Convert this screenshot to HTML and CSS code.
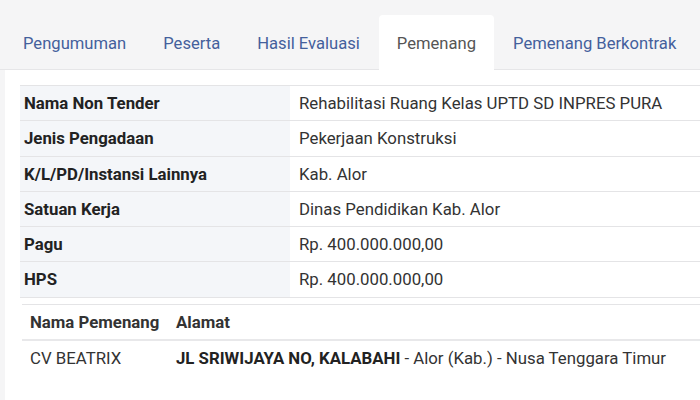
FILE: index.html
```html
<!DOCTYPE html>
<html>
<head>
<meta charset="utf-8">
<link rel="stylesheet" href="styles.css">
</head>
<body>
<ul class="tabs">
  <li class="tab">Pengumuman</li>
  <li class="tab">Peserta</li>
  <li class="tab">Hasil Evaluasi</li>
  <li class="tab active">Pemenang</li>
  <li class="tab">Pemenang Berkontrak</li>
</ul>
<div class="panel">
  <table class="info">
    <tr><th>Nama Non Tender</th><td>Rehabilitasi Ruang Kelas UPTD SD INPRES PURA</td></tr>
    <tr><th>Jenis Pengadaan</th><td>Pekerjaan Konstruksi</td></tr>
    <tr><th>K/L/PD/Instansi Lainnya</th><td>Kab. Alor</td></tr>
    <tr><th>Satuan Kerja</th><td>Dinas Pendidikan Kab. Alor</td></tr>
    <tr><th>Pagu</th><td>Rp. 400.000.000,00</td></tr>
    <tr><th>HPS</th><td>Rp. 400.000.000,00</td></tr>
  </table>
  <table class="winner">
    <tr><th class="name">Nama Pemenang</th><th class="wide">Alamat</th></tr>
    <tr><td>CV BEATRIX</td><td><b>JL SRIWIJAYA NO, KALABAHI</b> - Alor (Kab.) - Nusa Tenggara Timur</td></tr>
  </table>
</div>
</body>
</html>
```
FILE: styles.css
```css
html, body {
  margin: 0;
  padding: 0;
  background: #f5f5f6;
  font-family: Roboto, "Liberation Sans", sans-serif;
  overflow: hidden;
  width: 700px;
  height: 400px;
}
.tabs {
  list-style: none;
  margin: 0;
  padding: 15px 0 0 5px;
  display: flex;
  border-bottom: 1px solid #e6e6e8;
  width: 1000px;
}
.tab {
  padding: 19px 18px 16px;
  font-size: 16.6px;
  line-height: 19px;
  color: #44609c;
  border-radius: 4px 4px 0 0;
  white-space: nowrap;
  margin-right: 1px;
}
.tab.active {
  background: #fff;
  color: #555;
  margin-bottom: -1px;
  padding-bottom: 17px;
}
.panel {
  background: #fff;
  margin-left: 5px;
  padding: 15px 0 40px 15px;
  width: 1000px;
}
table {
  border-collapse: collapse;
  font-size: 16.8px;
  color: #333;
}
.info {
  width: 760px;
}
.info th, .info td {
  border-top: 1px solid #e4e4e6;
  padding: 7px 9px;
  line-height: 20.3px;
  text-align: left;
  white-space: nowrap;
}
.info th {
  width: 257px;
  padding-left: 4px;
  background: #f4f6f9;
  color: #222;
  font-weight: 700;
}
.info tr:last-child th, .info tr:last-child td {
  border-bottom: 1px solid #e4e4e6;
}
.winner {
  margin: 6px 0 0 2px;
  width: 700px;
}
.winner th, .winner td {
  border-top: 1px solid #e4e4e6;
  padding: 7px 8px;
  line-height: 20.3px;
  text-align: left;
  white-space: nowrap;
}
.winner th {
  color: #333;
  font-weight: 700;
  border-bottom: 2px solid #e8e8ea;
}
.winner th.name {
  width: 130px;
}
.winner th.wide {
  width: auto;
}
.winner td b {
  color: #222;
}
```
